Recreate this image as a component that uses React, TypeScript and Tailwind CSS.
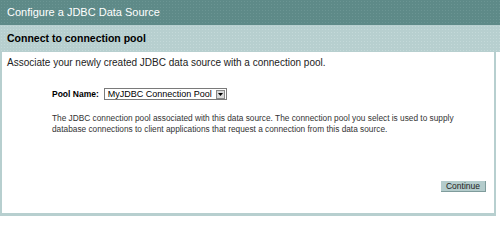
import React from 'react';

const pools = ['MyJDBC Connection Pool'];

export default function App() {
  return (
    <div className="h-[219px] w-[500px] bg-white font-['Liberation_Sans',Arial,sans-serif] text-black">
      <div className="flex h-[25px] items-center bg-[#5e8a88] bg-[radial-gradient(#6b9593_0.6px,transparent_0.8px)] bg-[length:3px_3px] pl-[7px] text-[11px] text-white">
        Configure a JDBC Data Source
      </div>
      <div className="flex h-[27px] items-center bg-[#b7cfcf] bg-[radial-gradient(#c4d9d9_0.6px,transparent_0.8px)] bg-[length:3px_3px] pl-[7px] text-[10.5px] font-bold">
        Connect to connection pool
      </div>
      <div className="flex h-[164px] w-[496px] flex-col border-x-[2px] border-b-[3px] border-[#b7cfcf] pl-[5px] pr-[8px]">
        <p className="mt-[5px] text-[10px] leading-[12px] text-[#222]">
          Associate your newly created JDBC data source with a connection pool.
        </p>
        <div className="mt-[19px] flex items-center pl-[45px]">
          <span className="text-[8.5px] font-bold">Pool Name:</span>
          <div className="ml-[5px] flex h-[12px] w-[123px] items-center border border-[#7a7a7a] bg-white pl-[3px] text-[9px] leading-none">
            <span className="flex-1 whitespace-nowrap">{pools[0]}</span>
            <span className="mr-[1px] flex h-[9px] w-[9px] items-center justify-center border border-[#888] bg-[#d8d8d8]">
              <svg width="5" height="3" viewBox="0 0 5 3">
                <path d="M0 0h5L2.5 3z" fill="#000" />
              </svg>
            </span>
          </div>
        </div>
        <p className="mt-[12px] pl-[45px] text-[8.3px] leading-[11px] text-[#333]">
          <span className="block whitespace-nowrap">
            The JDBC connection pool associated with this data source. The connection pool you select is used to supply
          </span>
          <span className="block whitespace-nowrap">
            database connections to client applications that request a connection from this data source.
          </span>
        </p>
        <div className="mt-auto mb-[21px] flex justify-end">
          <button className="h-[11px] w-[45px] border-b border-r border-[#7f9c9c] bg-[#b4cccc] text-[8.5px] leading-none text-[#222]">
            Continue
          </button>
        </div>
      </div>
    </div>
  );
}
